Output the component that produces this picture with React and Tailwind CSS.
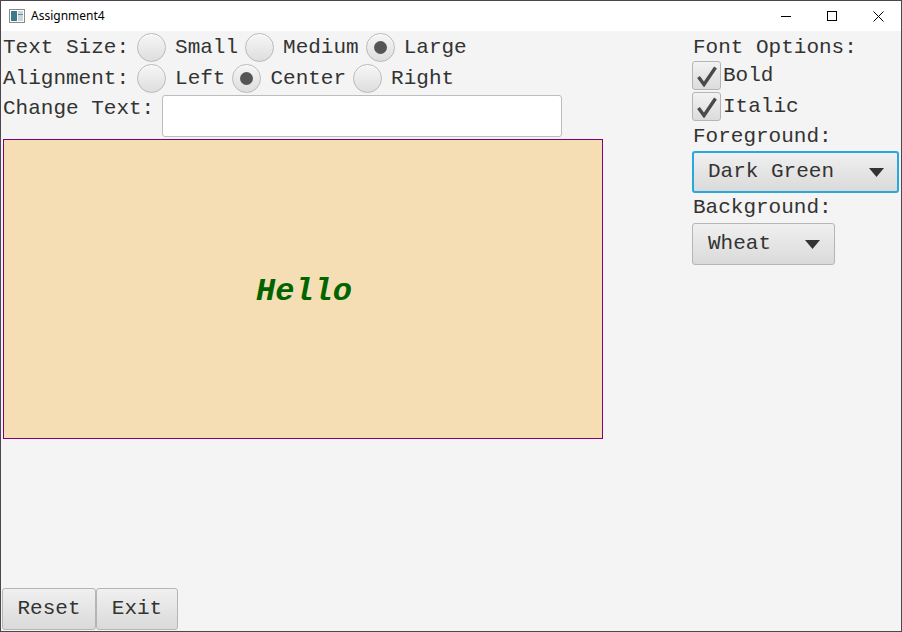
import React, { useState } from 'react';

const mono = "font-['Courier_New','Liberation_Mono',monospace]";

function Radio({ label, checked, onSelect }) {
  return (
    <button type="button" onClick={onSelect} className="flex items-center gap-[9px] mr-[7px]">
      <span className="w-[29px] h-[29px] rounded-full border border-[#b9b9b9] bg-gradient-to-b from-[#f6f6f6] to-[#dedede] flex items-center justify-center shadow-[inset_0_1px_0_#ffffff]">
        {checked && <span className="w-[13px] h-[13px] rounded-full bg-[#555555]" />}
      </span>
      <span>{label}</span>
    </button>
  );
}

function Check({ label, checked, onToggle }) {
  return (
    <button type="button" onClick={onToggle} className="h-[31px] flex items-center gap-[2px]">
      <span className="w-[29px] h-[29px] rounded-[3px] border border-[#b5b5b5] bg-gradient-to-b from-[#f2f2f2] to-[#dcdcdc] flex items-center justify-center">
        {checked && (
          <svg width="22" height="22" viewBox="0 0 22 22">
            <path d="M2.5 12 L8 19.5 L19.5 2.5" fill="none" stroke="#4a4a4a" strokeWidth="3.4" strokeLinejoin="miter" />
          </svg>
        )}
      </span>
      <span>{label}</span>
    </button>
  );
}

function Combo({ value, width, focused }) {
  return (
    <div
      className={`h-[42px] ${width} rounded-[3px] flex items-center justify-between bg-gradient-to-b from-[#f0f0f0] to-[#dadada] ${
        focused ? 'border-2 border-[#2aa7dc] pl-[14px] pr-[13px]' : 'border border-[#b5b5b5] pl-[15px] pr-[14px]'
      }`}
    >
      <span>{value}</span>
      <svg width="15" height="9" viewBox="0 0 15 9">
        <path d="M0 0 H15 L7.5 9 Z" fill="#333333" />
      </svg>
    </div>
  );
}

export default function App() {
  const [size, setSize] = useState('Large');
  const [align, setAlign] = useState('Center');
  const [text, setText] = useState('');
  const [bold, setBold] = useState(true);
  const [italic, setItalic] = useState(true);

  return (
    <div className="w-[902px] h-[632px] border border-[#4d4552] flex flex-col bg-[#f4f4f4] overflow-hidden">
      {/* title bar */}
      <div className="h-[30px] bg-white flex items-center font-['Noto_Sans','Liberation_Sans',sans-serif] text-[12px] text-black">
        <svg className="ml-[8px]" width="16" height="14" viewBox="0 0 16 14">
          <rect x="0.5" y="0.5" width="15" height="13" fill="#ffffff" stroke="#8a8a8a" />
          <rect x="2" y="2" width="6" height="10" fill="#3d7a8c" />
          <rect x="9" y="2" width="5" height="10" fill="#c9d6dc" />
          <rect x="9" y="5" width="5" height="1" fill="#6b8a96" />
        </svg>
        <span className="ml-[6px]">Assignment4</span>
        <div className="ml-auto flex items-center h-full">
          <div className="w-[46px] h-full flex items-center justify-center">
            <span className="w-[10px] h-px bg-black" />
          </div>
          <div className="w-[46px] h-full flex items-center justify-center">
            <span className="w-[10px] h-[10px] border border-black" />
          </div>
          <div className="w-[46px] h-full flex items-center justify-center">
            <svg width="11" height="11" viewBox="0 0 11 11">
              <path d="M0.5 0.5 L10.5 10.5 M10.5 0.5 L0.5 10.5" stroke="#000" strokeWidth="1" />
            </svg>
          </div>
        </div>
      </div>

      {/* content */}
      <div className={`flex-1 flex ${mono} text-[21px] text-[#333333]`}>
        <div className="flex-1 flex flex-col pl-[2px] pt-px">
          <div className="h-[31px] flex items-center">
            <span className="mr-[8px]">Text Size:</span>
            {['Small', 'Medium', 'Large'].map(s => (
              <Radio key={s} label={s} checked={size === s} onSelect={() => setSize(s)} />
            ))}
          </div>
          <div className="h-[31px] flex items-center">
            <span className="mr-[8px]">Alignment:</span>
            {['Left', 'Center', 'Right'].map(a => (
              <Radio key={a} label={a} checked={align === a} onSelect={() => setAlign(a)} />
            ))}
          </div>
          <div className="mt-px h-[42px] flex items-start">
            <span className="mr-[8px] h-[27px] flex items-center">Change Text:</span>
            <input
              value={text}
              onChange={e => setText(e.target.value)}
              className="w-[400px] h-[42px] bg-white border border-[#bdbdbd] rounded-[3px] px-2 outline-none"
            />
          </div>
          <div className="mt-[2px] w-[600px] h-[300px] border border-[#800080] bg-[#f5deb3] flex items-center justify-center">
            <span className={`text-[32px] text-[#006400] pt-[5px] pl-[2px] ${bold ? 'font-bold' : ''} ${italic ? 'italic' : ''}`}>
              {text || 'Hello'}
            </span>
          </div>
          <div className="mt-auto mb-px -ml-px flex">
            <button className="h-[42px] w-[94px] rounded-[3px] border border-[#b5b5b5] bg-gradient-to-b from-[#f0f0f0] to-[#dadada]">
              Reset
            </button>
            <button className="h-[42px] w-[82px] rounded-[3px] border border-[#b5b5b5] bg-gradient-to-b from-[#f0f0f0] to-[#dadada]">
              Exit
            </button>
          </div>
        </div>

        <div className="w-[209px] pr-[2px] pt-[3px] flex flex-col items-start">
          <div className="h-[28px] flex items-center pl-px">Font Options:</div>
          <div className="-mt-[2px] flex flex-col">
            <Check label="Bold" checked={bold} onToggle={() => setBold(!bold)} />
            <Check label="Italic" checked={italic} onToggle={() => setItalic(!italic)} />
          </div>
          <div className="h-[28px] flex items-center pl-px pt-[2px]">Foreground:</div>
          <div className="mt-px w-full">
            <Combo value="Dark Green" width="w-full" focused />
          </div>
          <div className="h-[29px] flex items-center pl-px">Background:</div>
          <div className="mt-px">
            <Combo value="Wheat" width="w-[143px]" />
          </div>
        </div>
      </div>
    </div>
  );
}
